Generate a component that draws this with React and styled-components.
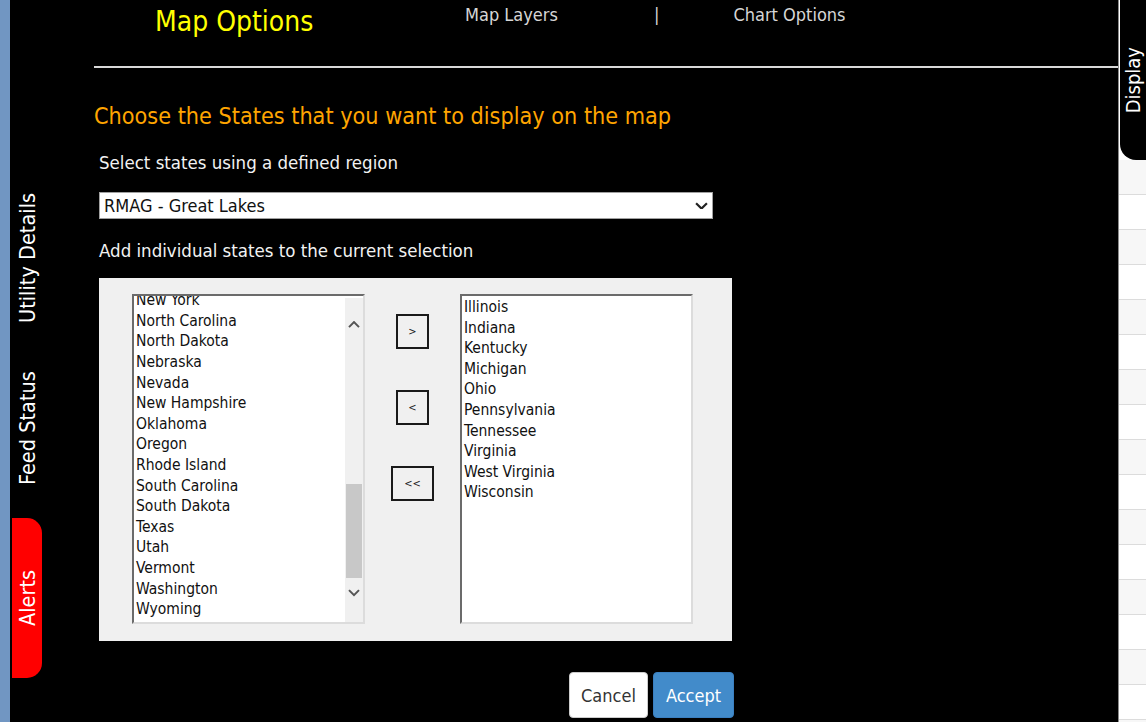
import React, { useEffect, useRef } from 'react'
import styled, { createGlobalStyle } from 'styled-components'

const GlobalStyle = createGlobalStyle`
  html, body {
    margin: 0;
    padding: 0;
    background: #ffffff;
    overflow: hidden;
  }
  body {
    font-family: "DejaVu Sans Condensed", "DejaVu Sans", sans-serif;
  }
`

const availableStates = [
  'Alabama', 'Alaska', 'Arizona', 'Arkansas', 'California', 'Colorado', 'Connecticut',
  'Delaware', 'Florida', 'Georgia', 'Hawaii', 'Idaho', 'Iowa', 'Kansas', 'Louisiana',
  'Maine', 'Maryland', 'Massachusetts', 'Minnesota', 'Mississippi', 'Missouri', 'Montana',
  'New Jersey', 'New Mexico', 'New York', 'North Carolina', 'North Dakota', 'Nebraska',
  'Nevada', 'New Hampshire', 'Oklahoma', 'Oregon', 'Rhode Island', 'South Carolina',
  'South Dakota', 'Texas', 'Utah', 'Vermont', 'Washington', 'Wyoming',
]

const selectedStates = [
  'Illinois', 'Indiana', 'Kentucky', 'Michigan', 'Ohio', 'Pennsylvania', 'Tennessee',
  'Virginia', 'West Virginia', 'Wisconsin',
]

const Page = styled.div`
  display: flex;
  height: 722px;
  width: 1146px;
`

const BlueStrip = styled.div`
  width: 10px;
  background: #7196c2;
  flex-shrink: 0;
`

const Panel = styled.div`
  display: flex;
  width: 1108px;
  background: #000000;
  flex-shrink: 0;
`

const TabColumn = styled.div`
  width: 84px;
  display: flex;
  flex-direction: column;
  padding-top: 186px;
  box-sizing: border-box;
`

const SideTab = styled.div`
  writing-mode: vertical-rl;
  transform: rotate(180deg);
  width: 30px;
  margin-left: 2px;
  height: ${(p) => p.$height}px;
  margin-bottom: ${(p) => p.$gap || 0}px;
  display: flex;
  align-items: center;
  justify-content: center;
  color: #ffffff;
  font-size: 21.5px;
  background: ${(p) => (p.$active ? '#ff0000' : 'transparent')};
  border-radius: ${(p) => (p.$active ? '15px 0 0 15px' : '0')};
`

const Content = styled.div`
  flex: 1;
  display: flex;
  flex-direction: column;
`

const Header = styled.div`
  height: 66px;
  display: flex;
  align-items: flex-start;
  border-bottom: 2px solid #d8d8d8;
`

const Title = styled.div`
  color: #ffff00;
  font-size: 28px;
  margin: 5px 0 0 61px;
  width: 250px;
`

const NavLink = styled.div`
  color: #d6d6d6;
  font-size: 18px;
  margin-top: 4px;
  margin-left: ${(p) => p.$left}px;
`

const Body = styled.div`
  padding-left: 5px;
  display: flex;
  flex-direction: column;
`

const Heading = styled.div`
  color: #ffa500;
  font-size: 23.2px;
  margin: 33px 0 0 -5px;
  line-height: 30px;
`

const Label = styled.div`
  color: #f2f2f2;
  font-size: 18.5px;
  line-height: 24px;
  margin-top: ${(p) => p.$top}px;
`

const SelectBox = styled.div`
  margin-top: 17px;
  width: 614px;
  height: 27px;
  box-sizing: border-box;
  background: #ffffff;
  border: 1px solid #a0a0a0;
  display: flex;
  align-items: center;
  justify-content: space-between;
  padding: 0 4px 0 4px;
  font-size: 18px;
  color: #111111;
`

const TransferPanel = styled.div`
  margin-top: 15px;
  width: 633px;
  height: 363px;
  box-sizing: border-box;
  background: #f0f0f0;
  display: flex;
  align-items: flex-start;
  padding: 16px 0 0 33px;
`

const ListBox = styled.div`
  width: 233px;
  height: 330px;
  box-sizing: border-box;
  background: #ffffff;
  border-top: 2px solid #6b6b6b;
  border-left: 2px solid #6b6b6b;
  border-right: 2px solid #dcdcdc;
  border-bottom: 2px solid #dcdcdc;
  display: flex;
`

const ListViewport = styled.div`
  flex: 1;
  overflow: hidden;
  padding: 1px 0 2px 2px;
`

const ListItem = styled.div`
  font-size: 15.5px;
  line-height: 20.6px;
  color: #111111;
  white-space: nowrap;
`

const ScrollBar = styled.div`
  width: 18px;
  background: #f0f0f0;
  display: flex;
  flex-direction: column;
  margin-top: 2px;
`

const ScrollButton = styled.div`
  height: ${(p) => p.$height}px;
  display: flex;
  align-items: center;
  justify-content: center;
  flex-shrink: 0;
`

const ScrollTrack = styled.div`
  flex: 1;
  display: flex;
  flex-direction: column;
  justify-content: flex-end;
`

const ScrollThumb = styled.div`
  height: 94px;
  margin: 0 1px;
  background: #c8c8c8;
`

const MoveColumn = styled.div`
  width: 95px;
  display: flex;
  flex-direction: column;
  align-items: center;
  padding-top: 20px;
  gap: 41px;
`

const MoveButton = styled.button`
  width: ${(p) => p.$width}px;
  height: 35px;
  box-sizing: border-box;
  border: 2px solid #1a1a1a;
  background: #f0f0f0;
  font-family: "DejaVu Sans Condensed", "DejaVu Sans", sans-serif;
  font-size: 11px;
  color: #222222;
  padding: 0;
`

const Footer = styled.div`
  width: 635px;
  display: flex;
  justify-content: flex-end;
  gap: 5px;
  margin-top: 31px;
`

const ActionButton = styled.button`
  width: ${(p) => p.$width}px;
  height: 46px;
  border-radius: 4px;
  border: 1px solid ${(p) => (p.$primary ? '#3a7fc0' : '#cccccc')};
  background: ${(p) => (p.$primary ? '#428bca' : '#ffffff')};
  color: ${(p) => (p.$primary ? '#ffffff' : '#333333')};
  font-family: "DejaVu Sans Condensed", "DejaVu Sans", sans-serif;
  font-size: 18px;
  padding: 0;
`

const RightEdge = styled.div`
  flex: 1;
  display: flex;
  flex-direction: column;
  border-left: 1px solid #8a8a8a;
`

const DisplayTab = styled.div`
  height: 160px;
  margin-left: 1px;
  background: #000000;
  border-bottom-left-radius: 16px;
  display: flex;
  align-items: center;
  justify-content: center;
  flex-shrink: 0;
`

const TabText = styled.span`
  writing-mode: vertical-rl;
  transform: rotate(180deg);
  color: #ffffff;
  font-size: 20px;
  line-height: 22px;
`

const GridRow = styled.div`
  height: 34px;
  flex-shrink: 0;
  background: ${(p) => (p.$striped ? '#f7f7f7' : '#ffffff')};
  border-bottom: 1px solid #dcdcdc;
`

const Chevron = ({ dir, size = 12, color = '#555' }) => (
  <svg width={size} height={size * 0.6} viewBox="0 0 12 7">
    <path
      d={dir === 'up' ? 'M1 6 L6 1 L11 6' : 'M1 1 L6 6 L11 1'}
      fill="none"
      stroke={color}
      strokeWidth="2"
    />
  </svg>
)

const StateList = () => {
  const viewport = useRef(null)
  useEffect(() => {
    const el = viewport.current
    if (el) el.scrollTop = el.scrollHeight
  }, [])
  return (
    <ListBox>
      <ListViewport ref={viewport}>
        {availableStates.map((s) => (
          <ListItem key={s}>{s}</ListItem>
        ))}
      </ListViewport>
      <ScrollBar>
        <ScrollButton $height={54}>
          <Chevron dir="up" />
        </ScrollButton>
        <ScrollTrack>
          <ScrollThumb />
        </ScrollTrack>
        <ScrollButton $height={30}>
          <Chevron dir="down" />
        </ScrollButton>
        <ScrollButton $height={14} />
      </ScrollBar>
    </ListBox>
  )
}

const App = () => (
  <Page>
    <GlobalStyle />
    <BlueStrip />
    <Panel>
      <TabColumn>
        <SideTab $height={144} $gap={38}>Utility Details</SideTab>
        <SideTab $height={120} $gap={30}>Feed Status</SideTab>
        <SideTab $height={160} $active>Alerts</SideTab>
      </TabColumn>
      <Content>
        <Header>
          <Title>Map Options</Title>
          <NavLink $left={60}>Map Layers</NavLink>
          <NavLink $left={96}>|</NavLink>
          <NavLink $left={74}>Chart Options</NavLink>
        </Header>
        <Body>
          <Heading>Choose the States that you want to display on the map</Heading>
          <Label $top={20}>Select states using a defined region</Label>
          <SelectBox>
            <span>RMAG - Great Lakes</span>
            <Chevron dir="down" size={13} color="#222" />
          </SelectBox>
          <Label $top={20}>Add individual states to the current selection</Label>
          <TransferPanel>
            <StateList />
            <MoveColumn>
              <MoveButton $width={33}>&gt;</MoveButton>
              <MoveButton $width={33}>&lt;</MoveButton>
              <MoveButton $width={43}>&lt;&lt;</MoveButton>
            </MoveColumn>
            <ListBox>
              <ListViewport>
                {selectedStates.map((s) => (
                  <ListItem key={s}>{s}</ListItem>
                ))}
              </ListViewport>
            </ListBox>
          </TransferPanel>
          <Footer>
            <ActionButton $width={79}>Cancel</ActionButton>
            <ActionButton $width={81} $primary>Accept</ActionButton>
          </Footer>
        </Body>
      </Content>
    </Panel>
    <RightEdge>
      <DisplayTab>
        <TabText>Display</TabText>
      </DisplayTab>
      {Array.from({ length: 17 }, (_, i) => (
        <GridRow key={i} $striped={i % 2 === 0} />
      ))}
    </RightEdge>
  </Page>
)

export default App
